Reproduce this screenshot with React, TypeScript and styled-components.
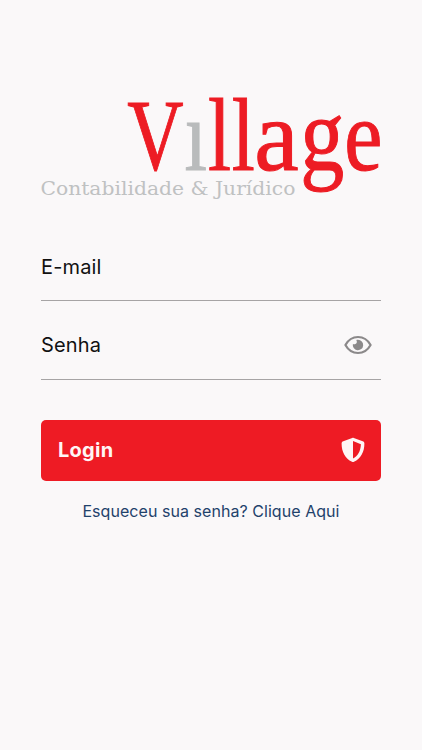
import React from "react";
import styled, { createGlobalStyle } from "styled-components";

const GlobalStyle = createGlobalStyle`
  * { box-sizing: border-box; }
  body {
    margin: 0;
    background: #faf8f9;
    font-family: Inter, "Liberation Sans", sans-serif;
  }
`;

const Screen = styled.main`
  min-height: 750px;
  padding: 90px 41px 0;
  display: flex;
  flex-direction: column;
  background: #faf8f9;
`;

const Logo = styled.svg`
  display: block;
  width: 340px;
  height: 110px;
  overflow: visible;
`;

const Letter = styled.text<{ $muted?: boolean }>`
  font-family: "Liberation Serif", serif;
  font-size: 100px;
  fill: ${(p) => (p.$muted ? "#b9bbbc" : "#ed1c24")};
  stroke: ${(p) => (p.$muted ? "#b9bbbc" : "#ed1c24")};
  stroke-width: 1px;
`;

const Tagline = styled.text`
  font-family: "DejaVu Serif", serif;
  font-size: 17.8px;
  fill: #bfc1c2;
`;

const Form = styled.form`
  display: flex;
  flex-direction: column;
  margin-top: 23px;
`;

const Field = styled.label`
  display: flex;
  align-items: center;
  justify-content: space-between;
  height: 78px;
  padding: 11px 9px 0 0;
  border-bottom: 1px solid #a6a4a5;
  font-size: 20px;
  letter-spacing: 0.15px;
  color: #111;

  & + & {
    height: 79px;
    padding-top: 10px;
  }
`;

const IconButton = styled.button`
  display: flex;
  padding: 0;
  border: 0;
  background: none;
  color: #8b898a;
`;

const LoginButton = styled.button`
  display: flex;
  align-items: center;
  justify-content: space-between;
  height: 61px;
  margin-top: 40px;
  padding: 0 16px 1px 17px;
  border: 0;
  border-radius: 5px;
  background: #ee1b24;
  color: #fff5f5;
  font: 700 20px Inter, sans-serif;
  letter-spacing: 0.25px;
`;

const ForgotLink = styled.a`
  align-self: center;
  margin-top: 20px;
  font-size: 16px;
  line-height: 20px;
  letter-spacing: 0.05px;
  white-space: nowrap;
  color: #1f426b;
`;

const letters = [
  { ch: "V", x: 127.2, y: 169.5, sx: 0.78, sy: 1.01 },
  { ch: "ı", x: 184.4, y: 169.6, sx: 0.81, sy: 1.02, muted: true },
  { ch: "l", x: 208, y: 169.6, sx: 0.83, sy: 1.03 },
  { ch: "l", x: 231.8, y: 169.6, sx: 0.83, sy: 1.03 },
  { ch: "a", x: 254.3, y: 169.6, sx: 1, sy: 1.02 },
  { ch: "g", x: 300.2, y: 170.4, sx: 0.88, sy: 1.035 },
  { ch: "e", x: 344.3, y: 169.6, sx: 0.86, sy: 1.02 },
];

const VillageLogo = () => (
  <Logo viewBox="41 90 340 110" role="img" aria-label="Village Contabilidade & Jurídico">
    {letters.map((l, i) => (
      <Letter key={i} $muted={l.muted} transform={`translate(${l.x} ${l.y}) scale(${l.sx} ${l.sy})`}>
        {l.ch}
      </Letter>
    ))}
    <Tagline x="40.4" y="195" textLength="255" lengthAdjust="spacingAndGlyphs">
      Contabilidade &amp; Jurídico
    </Tagline>
  </Logo>
);

const EyeIcon = () => (
  <svg width="28" height="20" viewBox="0 0 28 20" fill="none">
    <path
      d="M1.4 10C4.2 5 8.7 2 14 2s9.8 3 12.6 8c-2.8 5-7.3 8-12.6 8S4.2 15 1.4 10Z"
      stroke="currentColor"
      strokeWidth="2.2"
      strokeLinejoin="round"
    />
    <path
      d="M14 4.8a5.2 5.2 0 1 1-5.1 4.1c.7.5 1.7.6 2.5.2 1.3-.5 1.8-2 1.2-3.3-.1-.3-.2-.5-.4-.7.6-.2 1.2-.3 1.8-.3Z"
      fill="currentColor"
    />
  </svg>
);

const ShieldIcon = () => (
  <svg width="24" height="26" viewBox="0 0 24 26">
    <path
      fill="currentColor"
      fillRule="evenodd"
      d="M11.2.9c.5-.2 1.1-.2 1.6 0l8.9 3.4c1 .4 1.7 1.1 1.7 2.2 0 8.4-3.5 14.9-10.4 18.3-.6.3-1.4.3-2 0C4.1 21.4.6 14.9.6 6.5c0-1.1.7-1.8 1.7-2.2L11.2.9ZM12 4v17.6c4.9-2.7 7.6-7.3 7.9-14.3L12 4Z"
    />
  </svg>
);

export default function App() {
  return (
    <>
      <GlobalStyle />
      <Screen>
        <VillageLogo />
        <Form>
          <Field>E-mail</Field>
          <Field>
            Senha
            <IconButton type="button" aria-label="Mostrar senha">
              <EyeIcon />
            </IconButton>
          </Field>
          <LoginButton type="button">
            Login
            <ShieldIcon />
          </LoginButton>
          <ForgotLink>Esqueceu sua senha? Clique Aqui</ForgotLink>
        </Form>
      </Screen>
    </>
  );
}
